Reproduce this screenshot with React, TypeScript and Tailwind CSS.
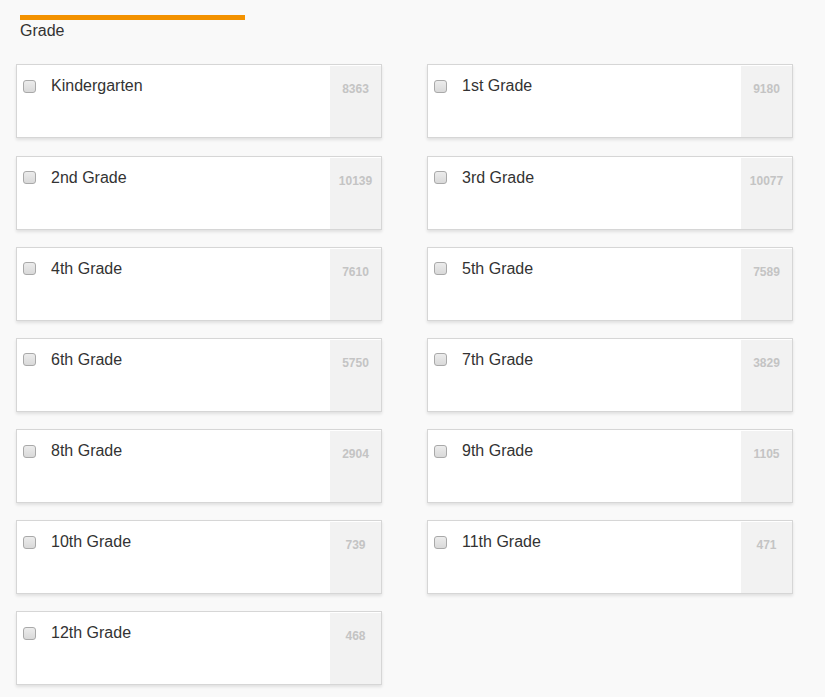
import React from "react";

const items: [string, number][] = [
  ["Kindergarten", 8363],
  ["1st Grade", 9180],
  ["2nd Grade", 10139],
  ["3rd Grade", 10077],
  ["4th Grade", 7610],
  ["5th Grade", 7589],
  ["6th Grade", 5750],
  ["7th Grade", 3829],
  ["8th Grade", 2904],
  ["9th Grade", 1105],
  ["10th Grade", 739],
  ["11th Grade", 471],
  ["12th Grade", 468],
];

function Card({ label, count }: { label: string; count: number }) {
  return (
    <div className="flex h-[74px] border border-[#d6d6d6] bg-white shadow-[0_2px_3px_rgba(0,0,0,0.1)]">
      <div className="flex-1 pl-[6px] pt-[12px]">
        <div className="flex h-[18px] items-center">
          <span className="block h-[13px] w-[13px] rounded-[3px] border border-[#a9a9a9] bg-gradient-to-b from-[#ececec] to-[#d9d9d9]" />
          <span className="ml-[15px] text-[16px] leading-[18px] text-[#333]">{label}</span>
        </div>
      </div>
      <div className="mt-px w-[51px] bg-[#f2f2f2] pt-[17px] text-center text-[12px] font-bold leading-[13px] text-[#c4c4c4]">
        {count}
      </div>
    </div>
  );
}

export default function App() {
  return (
    <div className="min-h-[697px] bg-[#f9f9f9] pl-[16px] pt-[15px]" style={{ fontFamily: '"Liberation Sans", Arial, sans-serif' }}>
      <div className="ml-[4px] h-[5px] w-[225px] bg-[#f39200]" />
      <div className="ml-[4px] pt-px text-[16px] leading-[20px] text-[#333]">Grade</div>
      <div className="mt-[23.4px] grid w-[777px] grid-cols-[366px_366px] gap-x-[45px] gap-y-[17.17px]">
        {items.map(([l, c]) => (
          <Card key={l} label={l} count={c} />
        ))}
      </div>
    </div>
  );
}
